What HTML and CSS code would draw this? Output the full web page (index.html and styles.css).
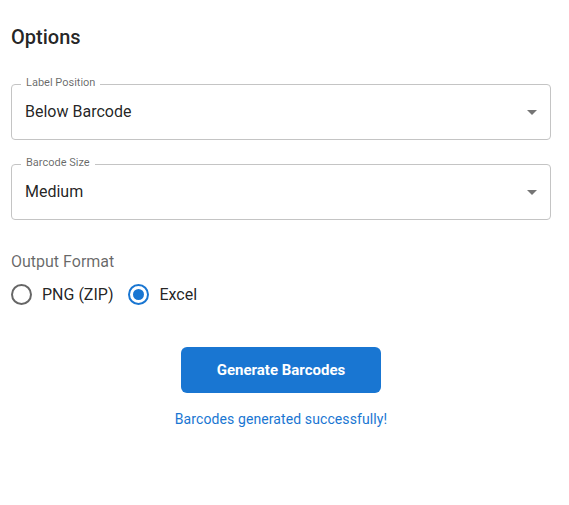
FILE: index.html
```html
<!DOCTYPE html>
<html lang="en">
<head>
  <meta charset="UTF-8">
  <title>Options</title>
  <link rel="stylesheet" href="styles.css">
</head>
<body>

<div class="options">
  <h2>Options</h2>

  <div class="field">
    <span class="field-label">Label Position</span>
    <span class="field-value">Below Barcode</span>
    <svg class="arrow" viewBox="0 0 24 24" width="24" height="24"><path d="M7 10l5 5 5-5z"/></svg>
  </div>

  <div class="field">
    <span class="field-label">Barcode Size</span>
    <span class="field-value">Medium</span>
    <svg class="arrow" viewBox="0 0 24 24" width="24" height="24"><path d="M7 10l5 5 5-5z"/></svg>
  </div>

  <div class="format">
    <div class="format-title">Output Format</div>
    <div class="radios">
      <label class="radio"><span class="circle"></span>PNG (ZIP)</label>
      <label class="radio checked"><span class="circle"></span>Excel</label>
    </div>
  </div>

  <div class="actions">
    <button class="generate">Generate Barcodes</button>
    <p class="status">Barcodes generated successfully!</p>
  </div>
</div>

</body>
</html>
```

FILE: styles.css
```css
body {
  margin: 0;
  font-family: Roboto, "Liberation Sans", sans-serif;
  color: rgba(0, 0, 0, 0.87);
  background: #fff;
}
.options {
  width: 540px;
  margin-left: 11px;
  padding-top: 25px;
}
h2 {
  margin: 0 0 35px;
  font-size: 20px;
  line-height: 24px;
  font-weight: 500;
}
.field {
  position: relative;
  display: flex;
  align-items: center;
  height: 52px;
  border: 1px solid #c4c4c4;
  border-radius: 4px;
  padding: 0 6px 2px 13px;
  margin-bottom: 24px;
}
.field-label {
  position: absolute;
  top: -9px;
  left: 9px;
  padding: 0 5px;
  background: #fff;
  font-size: 11px;
  line-height: 14px;
  color: rgba(0, 0, 0, 0.6);
}
.field-value {
  flex: 1;
  font-size: 16px;
}
.arrow {
  fill: rgba(0, 0, 0, 0.54);
  margin-top: 2px;
}
.format {
  margin-top: 30px;
}
.format-title {
  font-size: 16px;
  line-height: 24px;
  color: rgba(0, 0, 0, 0.6);
}
.radios {
  display: flex;
  gap: 15px;
  height: 40px;
  align-items: center;
}
.radio {
  display: flex;
  align-items: center;
  gap: 10px;
  font-size: 16px;
}
.circle {
  position: relative;
  width: 17px;
  height: 17px;
  border: 2px solid rgba(0, 0, 0, 0.6);
  border-radius: 50%;
}
.radio.checked .circle {
  border-color: #1976d2;
}
.radio.checked .circle::after {
  content: "";
  position: absolute;
  top: 3px;
  left: 3px;
  width: 11px;
  height: 11px;
  border-radius: 50%;
  background: #1976d2;
}
.actions {
  display: flex;
  flex-direction: column;
  align-items: center;
  margin-top: 33px;
}
.generate {
  width: 200px;
  height: 46px;
  border: none;
  border-radius: 6px;
  background: #1976d2;
  color: #fff;
  font-family: inherit;
  font-size: 15px;
  font-weight: 700;
  cursor: pointer;
}
.status {
  margin: 16px 0 0;
  font-size: 14px;
  line-height: 20px;
  letter-spacing: 0.1px;
  color: #1976d2;
}
```
